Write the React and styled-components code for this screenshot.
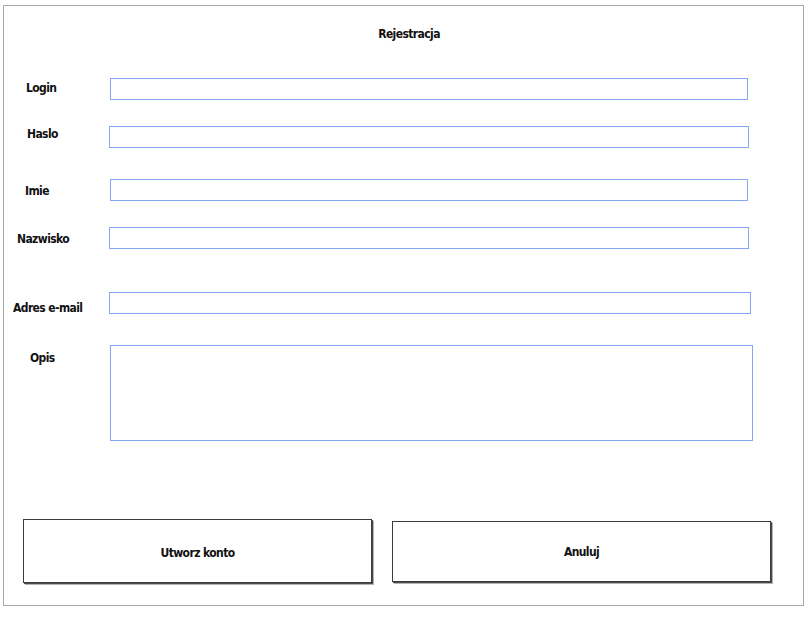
import React from "react";
import styled, { createGlobalStyle } from "styled-components";

const GlobalStyle = createGlobalStyle`
  html, body {
    margin: 0;
    padding: 0;
    background: #fff;
  }
  body {
    font-family: "DejaVu Sans Condensed", "DejaVu Sans", sans-serif;
    font-weight: bold;
    font-size: 12px;
    letter-spacing: -0.6px;
    color: #111;
  }
`;

const Frame = styled.div`
  box-sizing: border-box;
  margin: 5px 0 0 3px;
  width: 801px;
  height: 601px;
  border: 1px solid #a8a8a8;
  display: flex;
  flex-direction: column;
`;

const Title = styled.div`
  margin-top: 20px;
  line-height: 16px;
  text-align: center;
  padding-left: 11px;
`;

const Row = styled.div`
  display: flex;
  align-items: flex-start;
  margin-top: ${(p) => p.$gap}px;
`;

/* label sits at its own offset without growing the row */
const Label = styled.label`
  box-sizing: border-box;
  flex: none;
  width: ${(p) => p.$width}px;
  height: 16px;
  padding-left: ${(p) => p.$x}px;
  margin-top: ${(p) => p.$y}px;
  margin-bottom: ${(p) => -p.$y - 16}px;
  line-height: 16px;
  white-space: nowrap;
`;

const Field = styled.div`
  box-sizing: border-box;
  flex: none;
  width: ${(p) => p.$width}px;
  height: ${(p) => p.$height}px;
  border: 1px solid #86a6f6;
  background: #fff;
`;

const Actions = styled.div`
  display: flex;
  align-items: flex-start;
  margin-top: 78px;
  padding-left: 19px;
`;

const Button = styled.button`
  box-sizing: border-box;
  flex: none;
  width: ${(p) => p.$width}px;
  height: ${(p) => p.$height}px;
  margin-top: ${(p) => p.$y}px;
  margin-left: ${(p) => p.$x}px;
  padding: ${(p) => p.$ty}px 0 0;
  border: 1px solid #3c3c3c;
  background: #fff;
  box-shadow: 1px 1px 0 #4a4a4a, 2px 2px 0 #b4b4b4;
  font: inherit;
  letter-spacing: inherit;
  color: #111;
  cursor: pointer;
`;

const fields = [
  { label: "Login", gap: 36, x: 22, y: 2, left: 110, width: 638, height: 22 },
  { label: "Haslo", gap: 26, x: 23, y: 0, left: 109, width: 640, height: 22 },
  { label: "Imie", gap: 31, x: 21, y: 4, left: 110, width: 638, height: 22 },
  { label: "Nazwisko", gap: 26, x: 13, y: 4, left: 109, width: 640, height: 22 },
  { label: "Adres e-mail", gap: 43, x: 9, y: 8, left: 109, width: 642, height: 22 },
  { label: "Opis", gap: 31, x: 26, y: 5, left: 110, width: 643, height: 96 },
];

const App = () => {
  return (
    <>
      <GlobalStyle />
      <Frame>
        <Title>Rejestracja</Title>
        {fields.map((f) => (
          <Row key={f.label} $gap={f.gap}>
            <Label $width={f.left - 4} $x={f.x} $y={f.y}>
              {f.label}
            </Label>
            <Field $width={f.width} $height={f.height} />
          </Row>
        ))}
        <Actions>
          <Button $width={349} $height={64} $x={0} $y={0} $ty={3}>
            Utworz konto
          </Button>
          <Button $width={379} $height={61} $x={20} $y={2} $ty={0}>
            Anuluj
          </Button>
        </Actions>
      </Frame>
    </>
  );
};

export default App;
